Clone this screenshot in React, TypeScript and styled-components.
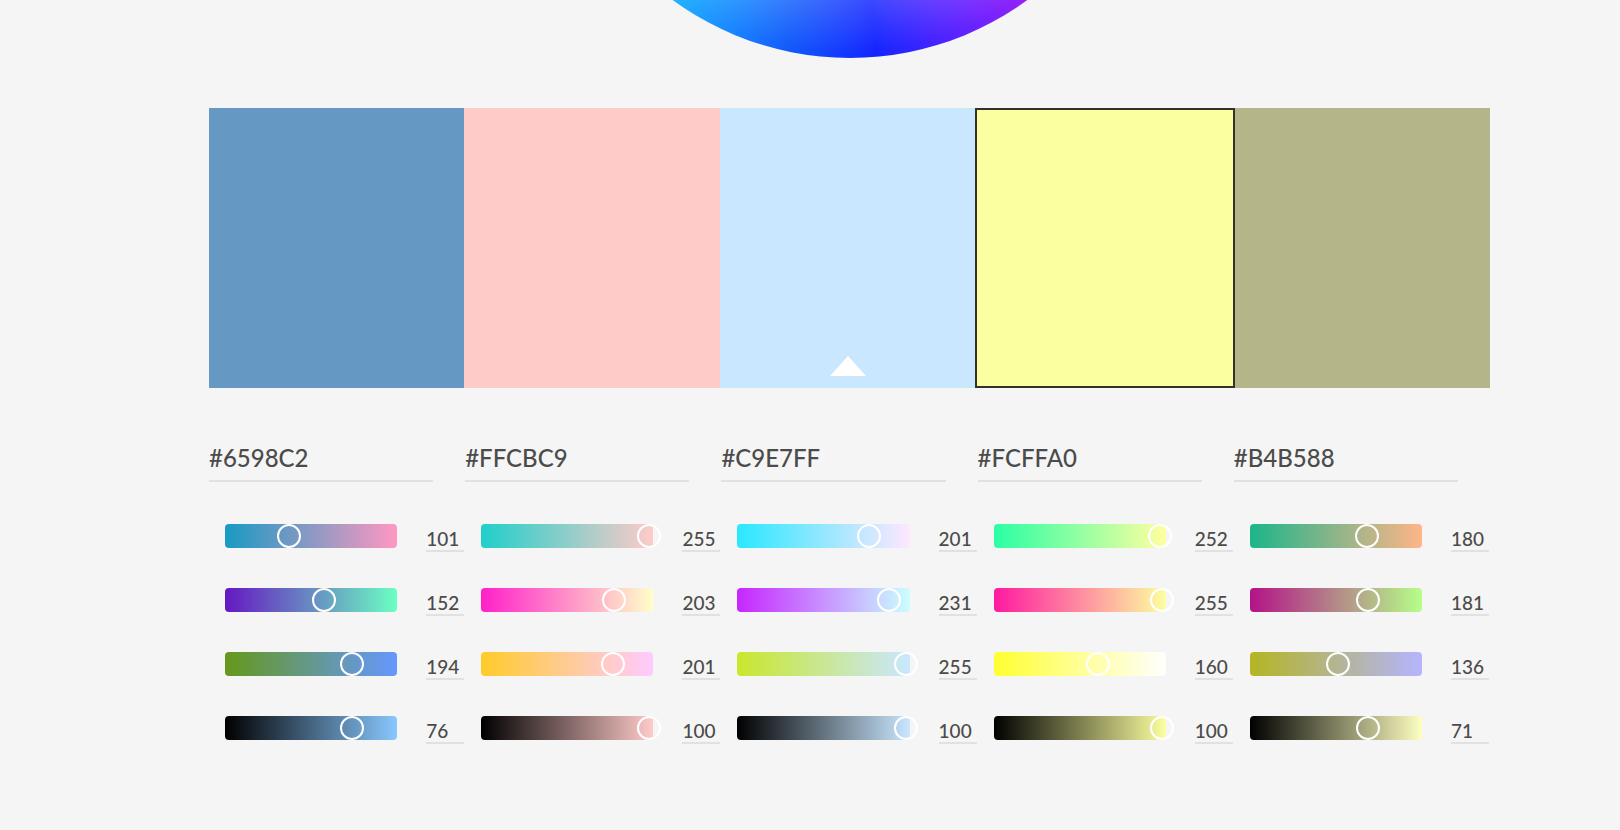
import React, { useState } from 'react';
import styled, { createGlobalStyle } from 'styled-components';

const GlobalStyle = createGlobalStyle`
  *, *::before, *::after { box-sizing: border-box; }
  body {
    margin: 0;
    background: #f5f5f5;
    color: #4b4b4b;
    font-family: Lato, "Open Sans", sans-serif;
    font-weight: 500;
  }
`;

const Page = styled.main`
  padding: 0 130px 84px 209px;
`;

const WheelArea = styled.div`
  display: flex;
  justify-content: center;
  align-items: flex-end;
  height: 108px;
  padding-bottom: 50px;
  overflow: hidden;
`;

const Wheel = styled.div`
  flex: none;
  width: 600px;
  height: 600px;
  border-radius: 50%;
  background:
    radial-gradient(circle closest-side, #ffffff 0%, rgba(255, 255, 255, 0.5) 50%, rgba(255, 255, 255, 0.2) 80%, rgba(255, 255, 255, 0.03) 98%),
    conic-gradient(
      #ff1a00 0deg,
      #ffd500 60deg,
      #ff10c0 110deg,
      #8f1cf8 144deg,
      #6a1cff 154deg,
      #0c1eff 175deg,
      #0c56fb 192deg,
      #168cff 206deg,
      #1cb4ff 217deg,
      #1de0d0 245deg,
      #30e020 290deg,
      #f0f020 330deg,
      #ff1a00 360deg
    );
`;

const Swatches = styled.div`
  display: flex;
  height: 280px;
`;

const Swatch = styled.button<{ $color: string; $selected: boolean }>`
  box-sizing: content-box;
  display: flex;
  flex: 1 1 0;
  justify-content: center;
  align-items: flex-end;
  padding: 0 0 12px;
  border: 0 solid #323228;
  border-width: ${(p) => (p.$selected ? '2px' : '0')};
  background: ${(p) => p.$color};
  cursor: pointer;
`;

const Columns = styled.div`
  display: grid;
  grid-template-columns: repeat(5, 1fr);
  padding-top: 44px;
`;

const Column = styled.section`
  display: flex;
  flex-direction: column;
  gap: 36px;
  min-width: 0;
`;

const HexField = styled.input`
  width: calc(100% - 32px);
  height: 50px;
  margin-bottom: 6px;
  padding: 2px 0 0;
  border: 0;
  border-bottom: 2px solid #e1e1e1;
  background: none;
  color: inherit;
  font: inherit;
  font-size: 24px;
  outline: none;
`;

const Channel = styled.div`
  display: flex;
  gap: 29px;
  height: 28px;
  padding: 0 1px 0 16px;
`;

const Track = styled.div<{ $from: string; $to: string }>`
  flex: 1;
  min-width: 0;
  height: 24px;
  border-radius: 4px;
  background: linear-gradient(to right, ${(p) => p.$from}, ${(p) => p.$to});
`;

const Slider = styled.input`
  appearance: none;
  display: block;
  width: calc(100% + 24px);
  height: 24px;
  margin: 0 -8px 0 -16px;
  background: none;
  cursor: pointer;

  &::-webkit-slider-thumb {
    appearance: none;
    width: 24px;
    height: 24px;
    border: 2px solid #ffffff;
    border-radius: 50%;
    background: transparent;
  }
`;

const ValueField = styled.input`
  width: 38px;
  height: 28px;
  padding: 2px 0 0;
  border: 0;
  border-bottom: 2px solid #e1e1e1;
  background: none;
  color: inherit;
  font: inherit;
  font-size: 19px;
  outline: none;
`;

interface ChannelData {
  value: number;
  from: string;
  to: string;
}

interface ColorData {
  hex: string;
  channels: ChannelData[];
}

const CHANNELS = [
  { name: 'Red', max: 255 },
  { name: 'Green', max: 255 },
  { name: 'Blue', max: 255 },
  { name: 'Brightness', max: 100 },
];

const COLORS: ColorData[] = [
  {
    hex: '#6598C2',
    channels: [
      { value: 101, from: '#189ac4', to: '#ff98c2' },
      { value: 152, from: '#6518c2', to: '#6bffc2' },
      { value: 194, from: '#65981a', to: '#6598ff' },
      { value: 76, from: '#000000', to: '#88c8ff' },
    ],
  },
  {
    hex: '#FFCBC9',
    channels: [
      { value: 255, from: '#20cfca', to: '#ffcbc9' },
      { value: 203, from: '#ff20c9', to: '#ffffc9' },
      { value: 201, from: '#ffcb2a', to: '#ffcbff' },
      { value: 100, from: '#000000', to: '#ffcbc9' },
    ],
  },
  {
    hex: '#C9E7FF',
    channels: [
      { value: 201, from: '#29e8ff', to: '#ffe7ff' },
      { value: 231, from: '#c626ff', to: '#c9ffff' },
      { value: 255, from: '#c9e72b', to: '#c9e7ff' },
      { value: 100, from: '#000000', to: '#c9e7ff' },
    ],
  },
  {
    hex: '#FCFFA0',
    channels: [
      { value: 252, from: '#2affa4', to: '#ffffa0' },
      { value: 255, from: '#ff1aa0', to: '#fcffa0' },
      { value: 160, from: '#ffff30', to: '#ffffff' },
      { value: 100, from: '#000000', to: '#fcffa0' },
    ],
  },
  {
    hex: '#B4B588',
    channels: [
      { value: 180, from: '#1cb58a', to: '#ffb588' },
      { value: 181, from: '#b31288', to: '#b5ff88' },
      { value: 136, from: '#b4b522', to: '#b4b5ff' },
      { value: 71, from: '#000000', to: '#feffc0' },
    ],
  },
];

function BaseMarker() {
  return (
    <svg width="36" height="20" viewBox="0 0 36 20" aria-hidden="true">
      <path d="M18 0L36 20H0Z" fill="#ffffff" />
    </svg>
  );
}

function ChannelRow({ label, max, data }: { label: string; max: number; data: ChannelData }) {
  const [value, setValue] = useState(data.value);
  const update = (text: string) => {
    const next = Number(text);
    if (next >= 0 && next <= max) setValue(next);
  };
  return (
    <Channel>
      <Track $from={data.from} $to={data.to}>
        <Slider
          type="range"
          aria-label={`${label} slider`}
          min={0}
          max={max}
          value={value}
          onChange={(e) => update(e.target.value)}
        />
      </Track>
      <ValueField
        type="text"
        inputMode="numeric"
        aria-label={label}
        value={value}
        onChange={(e) => update(e.target.value)}
      />
    </Channel>
  );
}

export default function App() {
  const [selected, setSelected] = useState(3);
  return (
    <>
      <GlobalStyle />
      <Page>
        <WheelArea>
          <Wheel />
        </WheelArea>
        <Swatches>
          {COLORS.map((color, i) => (
            <Swatch
              key={color.hex}
              type="button"
              aria-label={`Select ${color.hex}`}
              aria-pressed={i === selected}
              $color={color.hex}
              $selected={i === selected}
              onClick={() => setSelected(i)}
            >
              {i === 2 && <BaseMarker />}
            </Swatch>
          ))}
        </Swatches>
        <Columns>
          {COLORS.map((color) => (
            <Column key={color.hex}>
              <HexField type="text" aria-label="Hex value" defaultValue={color.hex} />
              {CHANNELS.map((channel, i) => (
                <ChannelRow
                  key={channel.name}
                  label={`${color.hex} ${channel.name}`}
                  max={channel.max}
                  data={color.channels[i]}
                />
              ))}
            </Column>
          ))}
        </Columns>
      </Page>
    </>
  );
}
